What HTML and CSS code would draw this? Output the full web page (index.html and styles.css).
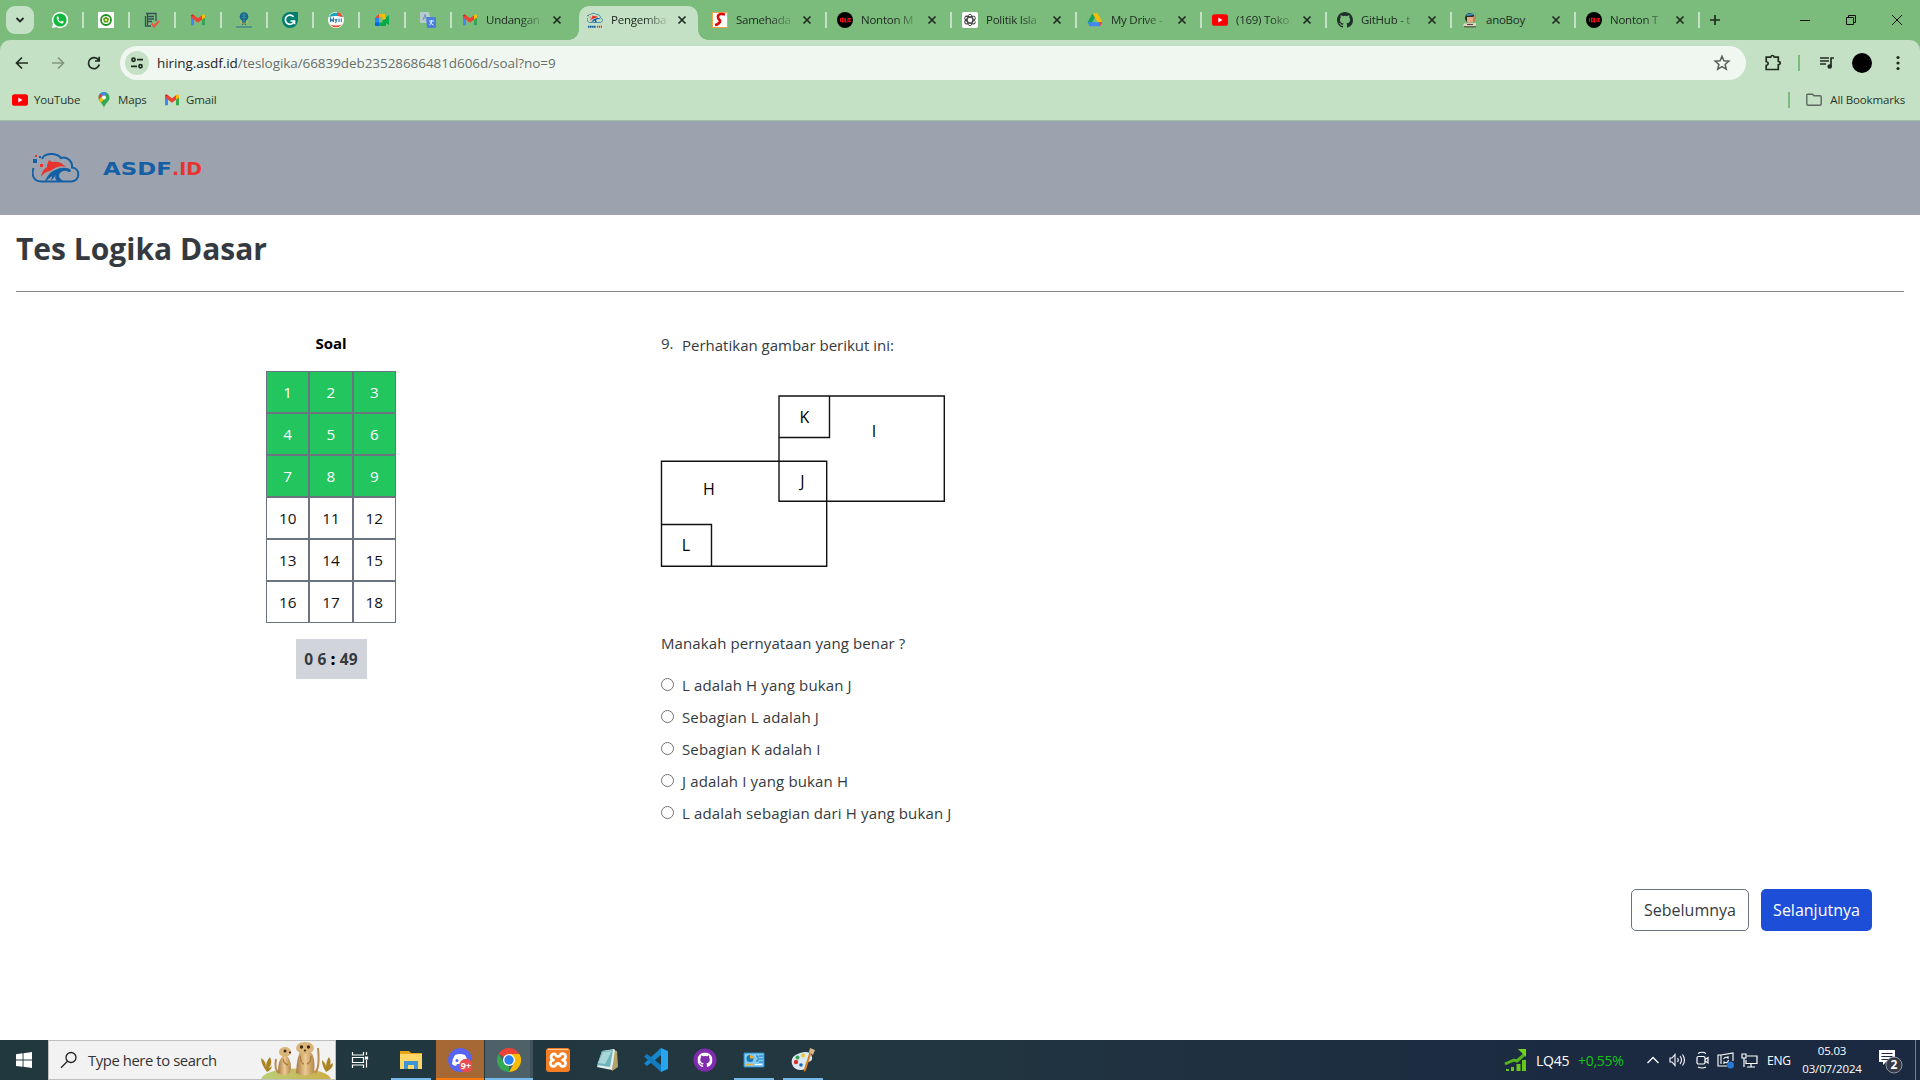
FILE: index.html
```html
<!DOCTYPE html>
<html lang="id">
<head>
<meta charset="utf-8">
<title>Pengembangan ASDF.ID</title>
<link rel="stylesheet" href="styles.css">
</head>
<body>
<svg class="defs" width="0" height="0">
  <symbol id="gmail" viewBox="0 0 16 16">
    <path d="M1 4.5V13.2h3V7.5z" fill="#4285f4"/><path d="M15 4.5v8.7h-3V7.5z" fill="#34a853"/>
    <path d="M1 4.2 4 6.6V3.2L3 2.6C2 2 1 2.800 1 4.200z" fill="#c5221f"/>
    <path d="M1 4.200v1.300l7 5.300 7-5.300-3-2.300-4 3-4-3z" fill="#ea4335"/><path d="M12 3.200v4.400l3-2.200V4.200c0-1.500-1-2.100-2-1.600z" fill="#fbbc04"/>
  </symbol>
  <symbol id="youtube" viewBox="0 0 16 16"><rect y="2.200" width="16" height="11.600" rx="2.600" fill="#f00"/><path d="M6.300 5.500v5L10.500 8z" fill="#fff"/></symbol>
  <symbol id="close" viewBox="0 0 16 16"><path d="m4.500 4.500 7 7m0-7-7 7" stroke="#202b22" stroke-width="1.700" fill="none"/></symbol>
  <symbol id="idlix" viewBox="0 0 16 16"><circle cx="8" cy="8" r="8"/><path d="M3.500 6v4M5.500 6v4h.6q1.200 0 1.200-2t-1.200-2zM8.500 6v4h1.500M11 6v4M12 6l1.500 4m0-4L12 10" stroke="#f00f18" stroke-width="1.100" fill="none"/></symbol>
  <symbol id="octocat" viewBox="0 0 16 16"><path d="M8 0C3.580 0 0 3.580 0 8c0 3.540 2.290 6.530 5.470 7.590.4.070.55-.17.55-.38 0-.19-.01-.82-.01-1.490-2.010.37-2.530-.49-2.690-.94-.09-.23-.48-.94-.82-1.130-.28-.15-.68-.52-.01-.53.63-.01 1.080.58 1.230.82.72 1.210 1.870.87 2.330.66.07-.52.28-.87.51-1.070-1.780-.2-3.640-.89-3.640-3.950 0-.87.31-1.590.82-2.150-.08-.2-.36-1.020.08-2.120 0 0 .67-.21 2.200.82a7.600 7.600 0 0 1 4 0c1.530-1.040 2.200-.82 2.200-.82.44 1.100.16 1.920.08 2.120.51.56.82 1.270.82 2.150 0 3.070-1.870 3.750-3.650 3.950.29.25.54.73.54 1.480 0 1.070-.01 1.930-.01 2.200 0 .21.15.46.55.38A8 8 0 0 0 16 8c0-4.420-3.580-8-8-8z"/></symbol>
  <symbol id="cloud" viewBox="0 0 48 30">
    <path d="M1.500 15C-1 22 2 28.500 9 28.500h30c9 0 10-13 1-14C41 8 34 3 29 5 24-1 12 0 10 6" fill="none" stroke="#1560a5" stroke-width="2"/>
    <path d="M15 12 17 7l3 2q5-1 9 1l5 4q-6-2-11 1l-5 3q-6 1-9 6 1-7 6-10z" fill="#e8332e"/>
    <path d="M13 28q4-9 10-11 8-4 15-1l1 2q-2 2-4 0-4-1-7 2-3 4 3 8h-6q-3-3-1-6l-5 6 1-5-6 5z" fill="#1560a5"/>
    <path d="M1 6h4v4H1zM7 3h2v2H7z" fill="#1560a5"/><path d="M3 2h2v2H3zM8 11h3v3H8z" fill="#e8332e"/>
  </symbol>
</svg>

<header class="browser">
  <div class="tabstrip">
    <button class="tab-search"><svg width="10" height="10" viewBox="0 0 10 10"><path d="m1.500 3 3.500 3.500L8.500 3" fill="none" stroke="#1c2a1f" stroke-width="1.800"/></svg></button>
    <div class="pins">
      <div class="pin"><svg viewBox="0 0 16 16"><path d="M8 0a8 8 0 0 0-7 11.800L0 16l4.300-1.100A8 8 0 1 0 8 0z" fill="#fff"/><circle cx="8" cy="8" r="6.600" fill="#12b83e"/><path d="M5.500 4.200q-1.600 1.300-.4 3.500 1.600 3 4.200 3.800 2 .4 2.500-1.800L9.900 8.800l-.9 1q-1.700-.8-2.600-2.400l.7-.9-.8-2z" fill="#fff"/></svg></div>
      <div class="pin"><svg viewBox="0 0 16 16"><path d="M0 0h16v16H0z" fill="#fff"/><circle cx="8" cy="8" r="5" fill="none" stroke="#1e9322" stroke-width="1.800"/><path d="m8 4.500 3 2.300-1 3.700H6L5 6.800z" fill="#5e9f16"/><path d="M7 7h2v2H7z" fill="#fff176"/></svg></div>
      <div class="pin"><svg viewBox="0 0 16 16"><path d="M2 1.500h10V9M7 14H1.500V4M4 4.500h6M4 7h6M4 9.500h4M3.500 2v11" fill="none" stroke="#32505a" stroke-width="1.300"/><path d="m7.500 11.500 2.500 3 5-5.500" fill="none" stroke="#f15343" stroke-width="2"/></svg></div>
      <div class="pin"><svg><use href="#gmail"/></svg></div>
      <div class="pin"><svg viewBox="0 0 16 16"><circle cx="8" cy="4.500" r="4.300" fill="#176193"/><path d="M6 8h4v5H6zM0 14.500h16v1H0z" fill="#286c91"/><path d="m4 9 4 3.500L12 9" fill="none" stroke="#e0b83b"/><path d="M5.500 3h5M5.500 5.500h5M8 1v10" stroke="#3e9a99" stroke-width=".8"/></svg></div>
      <div class="pin"><svg viewBox="0 0 16 16"><path d="M8 0h8v8a8 8 0 1 1-8-8" fill="#027e6f"/><path d="M11.500 4.800A4.600 4.600 0 1 0 12.300 9H8.500m4 0v3.200" fill="none" stroke="#fff" stroke-width="1.700"/></svg></div>
      <div class="pin"><svg viewBox="0 0 16 16"><circle cx="8" cy="8" r="8" fill="#fff"/><path d="M1 5a8 8 0 0 1 14 0q-7-2-14 0z" fill="#16a0bd"/><path d="M9 .1A8 8 0 0 1 15 5l-5-1zM2 12.500a8 8 0 0 0 12 0q-6 2-12 0z" fill="#ef4b32"/><path d="M2.500 10V6.500L4 9l1.500-2.500V10M7 7l1 2 1-2-1.500 4M11 6.500V10m2.300-3.500V10" fill="none" stroke="#2478ae" stroke-width="1.100"/></svg></div>
      <div class="pin"><svg viewBox="0 0 16 16"><path d="M1 6h4v5H1z" fill="#2684fc"/><path d="M5 2h6v3H5z" fill="#ffba00"/><path d="M5 2v4H1z" fill="#ea4335"/><path d="M1 10.500h4V14H2q-1 0-1-1z" fill="#0066da"/><path d="M5 10.500h3.500V8L15 3v10l-3-2v2q0 1-1 1H5z" fill="#00ac47"/><path d="M8.500 5H11q1 0 1 1v1L8.500 8z" fill="#ffba00"/></svg></div>
      <div class="pin"><svg viewBox="0 0 16 16"><path d="M1 0h8l2.500 11H1q-1 0-1-1V1q0-1 1-1z" fill="#b9cccd"/><path d="M6 5h9q1 0 1 1v9q0 1-1 1H7z" fill="#4a7fdc"/><path d="m3 8 2-5.500L7 8M3.800 6h2.500" fill="none" stroke="#6b93cc"/><path d="M9 9h5m-2.500-1v1q0 3-2 4m.5-3q1 2 3.500 3" fill="none" stroke="#e6efff"/></svg></div>
    </div>
    <div class="tabs">
      <div class="tab bare"><svg><use href="#gmail"/></svg><span>Undangan</span><svg class="x"><use href="#close"/></svg></div>
      <div class="tab active"><svg viewBox="0 0 48 48"><use href="#cloud" width="48" height="36"/><path d="M3 44h24" stroke="#1560a5" stroke-width="6" stroke-dasharray="5 1"/><path d="M30 44h15" stroke="#e8332e" stroke-width="6" stroke-dasharray="4 2"/></svg><span>Pengemba</span><svg class="x"><use href="#close"/></svg></div>
      <div class="tab"><svg viewBox="0 0 16 16"><path d="M.5.500h15v15H.500z" fill="#fff" stroke="#f3a14a"/><path d="M13 2.500Q7 1 6 4q-.4 2 1.500 4T5 12.500L3 13" fill="none" stroke="#d80b0b" stroke-width="2.600"/></svg><span>Samehada</span><svg class="x"><use href="#close"/></svg></div>
      <div class="tab"><svg><use href="#idlix"/></svg><span>Nonton M</span><svg class="x"><use href="#close"/></svg></div>
      <div class="tab"><svg viewBox="0 0 16 16"><rect width="16" height="16" rx="2" fill="#fff"/><g fill="none" stroke="#333" stroke-width=".9"><ellipse cx="8" cy="8" rx="2.700" ry="5.800"/><ellipse cx="8" cy="8" rx="2.700" ry="5.800" transform="rotate(60 8 8)"/><ellipse cx="8" cy="8" rx="2.700" ry="5.800" transform="rotate(120 8 8)"/></g></svg><span>Politik Isla</span><svg class="x"><use href="#close"/></svg></div>
      <div class="tab"><svg viewBox="0 0 16 16"><path d="m5.500 1.200-4.800 9 2.200 4L8 5.300z" fill="#16a05d"/><path d="M5.500 1.200h5L15.300 10h-4.800z" fill="#fbbc04"/><path d="M.7 10.200h9.800l-2.400 4H2.900z" fill="#4285f4"/><path d="M10.500 10.200h4.800l-2.400 4H8z" fill="#4285f4"/><path d="M12 10.200h3.300l-2 3.800z" fill="#ea4335"/></svg><span>My Drive -</span><svg class="x"><use href="#close"/></svg></div>
      <div class="tab"><svg><use href="#youtube"/></svg><span>(169) Toko</span><svg class="x"><use href="#close"/></svg></div>
      <div class="tab"><svg fill="#20302a"><use href="#octocat"/></svg><span>GitHub - t</span><svg class="x"><use href="#close"/></svg></div>
      <div class="tab slim"><svg viewBox="0 0 16 16"><circle cx="8" cy="6" r="5" fill="#302a29"/><path d="M5 5h6v5q-3 2-6 0z" fill="#e3ae85"/><path d="M4 2.500 10 1l2 2-7 1z" fill="#3794c2"/><path d="m11 5 3-4v7l-3 3z" fill="#b78a55"/><path d="M2 11.500 14 11v3H1z" fill="#ddd8c4"/><path d="M2 14.800h12M5 12.500h6" stroke="#55423a"/></svg><span class="whole">anoBoy</span><svg class="x"><use href="#close"/></svg></div>
      <div class="tab slim"><svg><use href="#idlix"/></svg><span>Nonton T</span><svg class="x"><use href="#close"/></svg></div>
    </div>
    <svg class="newtab" width="12" height="12" viewBox="0 0 12 12"><path d="M6 1v10M1 6h10" stroke="#202b22" stroke-width="1.700"/></svg>
    <div class="winctl">
      <svg viewBox="0 0 12 12"><path d="M1 6.500h10" stroke="#111"/></svg>
      <svg viewBox="0 0 12 12"><path d="M1.500 3.500h7v7h-7zM3.500 3.500v-2h7v7h-2" fill="none" stroke="#111"/></svg>
      <svg viewBox="0 0 12 12"><path d="m1 1 10 10M11 1 1 11" stroke="#111"/></svg>
    </div>
  </div>

  <div class="panel">
    <div class="toolbar">
      <div class="nav">
        <svg viewBox="0 0 16 16"><path d="M14 8H3m5-5.500L2.500 8 8 13.500" fill="none" stroke="#202b22" stroke-width="1.700"/></svg>
        <svg viewBox="0 0 16 16"><path d="M2 8h11M8 2.500 13.500 8 8 13.500" fill="none" stroke="#82977f" stroke-width="1.700"/></svg>
        <svg viewBox="0 0 16 16"><path d="M13.300 9.500A5.500 5.500 0 1 1 12.500 5M13.200 1.800V6H9" fill="none" stroke="#202b22" stroke-width="1.700"/></svg>
      </div>
      <div class="omnibox">
        <div class="site"><svg width="14" height="14" viewBox="0 0 14 14" fill="none" stroke="#202b22" stroke-width="1.700"><circle cx="3.500" cy="3.700" r="1.600"/><path d="M7 3.700h6M1 10.300h6"/><circle cx="10.500" cy="10.300" r="1.600"/></svg></div>
        <div class="url"><b>hiring.asdf.id</b>/teslogika/66839deb23528686481d606d/soal?no=9</div>
        <svg class="star" width="18" height="18" viewBox="0 0 18 18"><path d="m9 2.300 1.900 4.500 4.900.4-3.700 3.200 1.200 4.800L9 12.600l-4.300 2.600 1.200-4.800L2.200 7.200l4.900-.4z" fill="none" stroke="#55605a" stroke-width="1.500"/></svg>
      </div>
      <div class="actions">
        <svg width="18" height="18" viewBox="0 0 18 18"><path d="M2.200 3.200h4.500q.5-1.700 1.800-1.700t1.800 1.700h4v4.200q2 .3 2 1.700t-2 1.700v4.700H2.200v-4q2-.4 2-2t-2-2z" fill="none" stroke="#202b22" stroke-width="1.700"/></svg>
        <i class="bar"></i>
        <svg width="16" height="16" viewBox="0 0 16 16"><path d="M1 3h9M1 6h9M1 9h6M12 11V3h3" fill="none" stroke="#202b22" stroke-width="1.700"/><circle cx="10.700" cy="11.500" r="2.300" fill="#202b22"/></svg>
        <i class="avatar"></i>
        <svg width="4" height="16" viewBox="0 0 4 16" fill="#202b22"><circle cx="2" cy="2.500" r="1.600"/><circle cx="2" cy="8" r="1.600"/><circle cx="2" cy="13.500" r="1.600"/></svg>
      </div>
    </div>
    <div class="bookmarks">
      <div class="bm b1"><svg><use href="#youtube"/></svg><span>YouTube</span></div>
      <div class="bm b2"><svg viewBox="0 0 16 16"><path d="M8 0a5.500 5.500 0 0 1 5.500 5.500C13.500 10 9 11 8 16 7 11 2.500 10 2.500 5.500A5.500 5.500 0 0 1 8 0z" fill="#34a853"/><path d="M8 0a5.500 5.500 0 0 0-4.300 2L7 5l4-4Q9.700 0 8 0z" fill="#4285f4"/><path d="M3.700 2Q2 4 2.700 7l4-3.500z" fill="#ea4335"/><path d="m3 7.500 3-3 2 3-3.200 3.300z" fill="#fbbc04"/><circle cx="8" cy="5.500" r="2" fill="#fff"/></svg><span>Maps</span></div>
      <div class="bm b3"><svg><use href="#gmail"/></svg><span>Gmail</span></div>
      <div class="bm all"><i class="bar"></i><svg viewBox="0 0 16 16"><path d="M.8 3v9q0 1.200 1.200 1.200h12q1.200 0 1.200-1.200V5q0-1.200-1.200-1.200H8L6.500 2.300H2Q.8 2.300.8 3z" fill="none" stroke="#5d675f" stroke-width="1.400"/></svg><span>All Bookmarks</span></div>
    </div>
  </div>
</header>

<main>
  <div class="brand">
    <svg width="48" height="30"><use href="#cloud"/></svg>
    <svg class="word" width="100" height="16"><text x="0" y="14.500" textLength="69" lengthAdjust="spacingAndGlyphs" fill="#1560a5">ASDF</text><text x="69" y="14.500" textLength="30" lengthAdjust="spacingAndGlyphs" fill="#e8332e">.ID</text></svg>
  </div>
  <h1>Tes Logika Dasar</h1>
  <div class="quiz">
    <aside>
      <h2>Soal</h2>
      <div class="numbers">
        <a class="done">1</a><a class="done">2</a><a class="done">3</a>
        <a class="done">4</a><a class="done">5</a><a class="done">6</a>
        <a class="done">7</a><a class="done">8</a><a class="done">9</a>
        <a>10</a><a>11</a><a>12</a><a>13</a><a>14</a><a>15</a><a>16</a><a>17</a><a>18</a>
      </div>
      <div class="timer">0 6 <b>:</b> 49</div>
    </aside>
    <section class="question">
      <div class="prompt"><span class="no">9.</span><span class="lead">Perhatikan gambar berikut ini:</span></div>
      <svg class="figure" width="285" height="172" viewBox="0 0 285 172">
        <g fill="none" stroke="#111" stroke-width="1.400"><path d="M118 1h165.300v105.300H118zM118 1H168.500v41.500H118z"/><path d="M.5 66.200h165.200v105H.500zM.5 129.500h50v42"/></g>
        <text x="143.500" y="28">K</text><text x="213" y="41.500">I</text><text x="141.500" y="91.500">J</text><text x="48" y="99.500">H</text><text x="25" y="155.500">L</text>
      </svg>
      <p class="ask">Manakah pernyataan yang benar ?</p>
      <div class="options">
        <label><i></i><span>L adalah H yang bukan J</span></label>
        <label><i></i><span>Sebagian L adalah J</span></label>
        <label><i></i><span>Sebagian K adalah I</span></label>
        <label><i></i><span>J adalah I yang bukan H</span></label>
        <label><i></i><span>L adalah sebagian dari H yang bukan J</span></label>
      </div>
    </section>
  </div>
  <div class="pager"><button class="prev">Sebelumnya</button><button class="next">Selanjutnya</button></div>
</main>

<footer class="taskbar">
  <div class="start"><svg width="16" height="16" viewBox="0 0 16 16" fill="#fff"><path d="M0 2.200 6.600 1.300v6.300H0zM7.500 1.200 16 0v7.600H7.500zM0 8.500h6.600v6.300L0 13.900zM7.500 8.500H16V16l-8.500-1.200z"/></svg></div>
  <div class="search">
    <svg width="18" height="18" viewBox="0 0 18 18"><circle cx="11" cy="6.500" r="5" fill="none" stroke="#222" stroke-width="1.300"/><path d="m7.500 10.200-6.500 6.500" stroke="#222" stroke-width="1.300"/></svg>
    <span>Type here to search</span>
    <svg class="meerkats" width="74" height="38" viewBox="0 0 74 38">
      <defs>
        <linearGradient id="fur"><stop stop-color="#a87a42"/><stop offset=".5" stop-color="#ebcb92"/><stop offset="1" stop-color="#b5854a"/></linearGradient>
        <linearGradient id="hill"><stop stop-color="#b9cf78"/><stop offset="1" stop-color="#cfae48"/></linearGradient>
      </defs>
      <ellipse cx="36" cy="39" rx="35" ry="11.500" fill="url(#hill)"/>
      <path d="M7 31Q1 23 1 17q5 3 5 9 0-6 4-10 3 6-1 11 3-1 3-3 0 5-5 7zM66 31q-4-6-4-12 4 3 4 8 0-7 3-11 3 5 0 10 1-3 4-4 0 6-7 9z" fill="#a98421"/>
      <path d="M19 32q-5-3-3-14" fill="none" stroke="#b98c50" stroke-width="2"/><path d="M55 32q5-5 3-25" fill="none" stroke="#b98c50" stroke-width="2"/>
      <path d="M18 32q0-14 5-17h4q6 6 3 17-6 4-12 0z" fill="url(#fur)"/><ellipse cx="25" cy="11" rx="6" ry="5" fill="#dcb578"/>
      <path d="M36 32q1-18 5-22h9q6 6 4 22-9 5-18 0z" fill="url(#fur)"/><path d="M36 8q0-7 9-7t9 7q-2 5-9 5t-9-5z" fill="#dcb578"/>
      <circle cx="41.500" cy="6" r="1.700" fill="#3e2a18"/><circle cx="48.500" cy="6" r="1.700" fill="#3e2a18"/><circle cx="45" cy="9.500" r="1.100" fill="#3e2a18"/>
      <circle cx="25" cy="10" r="1.500" fill="#3e2a18"/><circle cx="30" cy="11.500" r="1.100" fill="#3e2a18"/>
      <path d="M40 15q1 8 4 8m7-8q0 7-4 8M23 18q1 5 5 6" fill="none" stroke="#ad7d42" stroke-width="1.300"/>
    </svg>
  </div>
  <div class="apps">
    <div class="app"><svg viewBox="0 0 24 24" fill="none" stroke="#fff" stroke-width="1.200"><path d="M4.500 4v3h11V4M4.500 20v-3h11v3M4.500 9.500h11v5h-11zM18.500 4v3M18.500 12v7.500"/><path d="M17.500 9h2v2h-2z" fill="#fff"/></svg></div>
    <div class="app run gap"><svg viewBox="0 0 24 24"><path d="M1 3h9l2 2h11v16H1z" fill="#e8a516"/><path d="M1 6h22v15H1z" fill="#ffd768"/><path d="M5 21v-8h14v8h-4v-4H9v4z" fill="#3e96d7"/></svg></div>
    <div class="app alert"><svg viewBox="0 0 24 24"><circle cx="12" cy="12" r="12" fill="#5865f2"/><path d="M7 7q5-2 10 0 3 4 3 9-2 2-4 2l-1-2H9l-1 2q-2 0-4-2 0-5 3-9z" fill="#fff"/><circle cx="9" cy="12.500" r="1.500" fill="#5865f2"/><circle cx="18" cy="17.500" r="6.800" fill="#e84b50"/><text x="18" y="21" text-anchor="middle" class="badge9">9+</text></svg></div>
    <div class="app run focus"><svg viewBox="0 0 24 24"><path d="M12 12 1.600 6A12 12 0 0 1 22.400 6z" fill="#ea4335"/><path d="M12 12 12 24A12 12 0 0 1 1.600 6L7 15z" fill="#34a853"/><path d="M12 6h10.400A12 12 0 0 1 12 24l5-9z" fill="#fbbc04"/><circle cx="12" cy="12" r="6" fill="#fff"/><circle cx="12" cy="12" r="4.700" fill="#2980ee"/></svg></div>
    <div class="app"><svg viewBox="0 0 24 24"><rect width="24" height="24" rx="3" fill="#f57e24"/><path d="M2 1.500h20" stroke="#ffc99b"/><path d="M8.500 6a3 3 0 0 0-2 5.500l1 .5-1 .5a3 3 0 1 0 3 5q.5-2 2.500-2t2.500 2a3 3 0 1 0 3-5l-1-.5 1-.5a3 3 0 1 0-3-5q-.5 2-2.500 2t-2.500-2z" fill="none" stroke="#fff" stroke-width="2.800" stroke-linejoin="round"/></svg></div>
    <div class="app"><svg viewBox="0 0 24 24"><path d="m18 2 4 1 1 16-6 4z" fill="#b6a368"/><path d="m7 3 12-2 1 1-3 20-15-3z" fill="#e4efed"/><path d="m7 3 11-1-3 17-13-2z" fill="#6eb3b9"/><path d="m8 4 9-1-7 13-7-1z" fill="#a8d5d7"/></svg></div>
    <div class="app"><svg viewBox="0 0 24 24"><path d="m17 0 7 3v18l-7 3z" fill="#28a5ef"/><path d="M17 0v7L3 18l-3-2.500z" fill="#1487cf"/><path d="M17 24v-7L3 6 0 8.500z" fill="#137cc1"/></svg></div>
    <div class="app"><svg viewBox="0 0 24 24"><circle cx="12" cy="12" r="11.500" fill="#822bb0"/><use href="#octocat" x="4.500" y="4.500" width="15" height="15" fill="#fff"/></svg></div>
    <div class="app run"><svg viewBox="0 0 24 24"><path d="M2 5h20v14H2z" fill="#83cdf4" stroke="#2785c2"/><circle cx="8" cy="10.500" r="3.500" fill="#1976b8"/><path d="M8 10.500V7a3.500 3.500 0 0 1 3.500 3.500z" fill="#f5af22"/><path d="M14 8h2v5h-2m3-5h4m-4 3h4m-4 3h4" fill="none" stroke="#1976b8"/><path d="M4 16.500h7" stroke="#f5af22" stroke-width="1.500"/><path d="M13 16.500h7" stroke="#fff"/></svg></div>
    <div class="app run"><svg viewBox="0 0 24 24"><path d="M1 16Q-1 8 9 5q11-3 12 4 1 4-4 5-3 1-2 4 0 4-5 4-7 0-9-6z" fill="#dce8ef"/><circle cx="5" cy="14" r="2.200" fill="#d3342c"/><circle cx="6.500" cy="9.500" r="2" fill="#3ba354"/><circle cx="12" cy="7.500" r="2" fill="#e7ca2f"/><circle cx="10" cy="17" r="1.800" fill="#1b66b0"/><path d="m21 3-6 19-2 2v-3L19 3z" fill="#d68025"/><path d="m18 4 1-4 5 2-2 5z" fill="#d6b68a"/></svg></div>
  </div>
  <div class="tray">
    <svg class="stock" width="24" height="24" viewBox="0 0 24 24"><path d="m1 16 9-4 3 1 8-7" fill="none" stroke="#55b51e" stroke-width="3"/><path d="M14 1h8v8z" fill="#73d51c"/><path d="M2 21h3v2H2zM7 19h3v4H7zM12.500 16h4v7h-4zM18 12h4v11h-4z" fill="#66c71a"/></svg>
    <span class="lq">LQ45</span><span class="pct">+0,55%</span>
    <svg class="chev" width="14" height="14" viewBox="0 0 14 14"><path d="m1.500 10 5.500-5.500L12.500 10" fill="none" stroke="#fff" stroke-width="1.300"/></svg>
    <svg class="t1" width="17" height="16" viewBox="0 0 17 16" fill="none" stroke="#fff" stroke-width="1.100"><path d="M1 6h2l3-3.500v11L3 10H1zM8.500 6q1.500 2 0 4M11 4q3 4 0 8M13.500 2.500q4 5.500 0 11"/></svg>
    <svg class="t2" width="16" height="18" viewBox="0 0 16 18" fill="none" stroke="#fff" stroke-width="1.200"><rect x="2" y="5.500" width="8" height="7.500" rx="1.500"/><path d="m10 8.500 3-2v5.500l-3-2M3 2.500q4-2.500 8 0M3 16q4 2 8 0"/></svg>
    <svg class="t3" width="17" height="17" viewBox="0 0 17 17" fill="none" stroke="#fff" stroke-width="1.100"><path d="M16 9V1L4 3H1v11h9M4 3v9"/><path d="M6.500 7q2-3 4.500-1V4M11.500 8q-1 4-4.500 2v2"/><circle cx="13.500" cy="13" r="3.500" fill="#2779d0" stroke="none"/></svg>
    <svg class="t4" width="17" height="16" viewBox="0 0 17 16" fill="none" stroke="#fff" stroke-width="1.200"><path d="M6 4h10v7.500H5V8M10 11.500V15m-4 0h8M1 2h4v4H1zM3 6v9"/></svg>
    <span class="eng">ENG</span>
    <div class="clock"><span>05.03</span><span>03/07/2024</span></div>
    <div class="notif"><svg width="26" height="26" viewBox="0 0 26 26"><path d="M1 2h16v12h-9l-3 3v-3H1z" fill="#fff"/><path d="M3.500 5.500h11m-11 3h11m-11 3h7" stroke="#1b2a41"/><circle cx="16" cy="17" r="8" fill="#343b45" stroke="#8c939e"/><text x="16" y="21.300" text-anchor="middle" class="badge2">2</text></svg></div>
    <i class="peek"></i>
  </div>
</footer>
</body>
</html>
```
FILE: styles.css
```css
* { box-sizing: border-box; }
body { margin: 0; width: 1920px; height: 1080px; overflow: hidden; display: flex; flex-direction: column; background: #fff; font-family: "Open Sans", "Noto Sans", sans-serif; color: #343a40; }
.defs { position: absolute; }
svg { display: block; flex: none; }
button { font: inherit; border: 0; padding: 0; }

.browser { height: 121px; background: #7bbc7d; border-bottom: 1px solid #a3bfa4; flex: none; }
.tabstrip { height: 40px; display: flex; align-items: center; font-size: 11.5px; color: #202b22; }
.tab-search { width: 28px; height: 28px; margin-left: 6px; border-radius: 9px; background: #c5e1c5; display: grid; place-items: center; }
.pins { display: flex; margin-left: 4px; }
.pin { width: 46px; height: 16px; padding-left: 14px; border-right: 2px solid #c5e1c5; }
.pin svg, .tab svg { width: 16px; height: 16px; }
.tabs { display: flex; align-self: stretch; align-items: center; }
.tab { width: 125px; height: 16px; padding-left: 10px; display: flex; align-items: center; border-right: 2px solid #c5e1c5; }
.tab span { width: 56px; margin-left: 8px; white-space: nowrap; line-height: 18px; letter-spacing: -.25px; mask-image: linear-gradient(90deg, #000 60%, rgba(0, 0, 0, .15) 100%); }
.tab .whole { mask-image: none; }
.tab .x { margin-left: 7px; }
.tab.bare { border-color: transparent; }
.tab.active { position: relative; width: 119px; height: 34px; margin: 6px 4px 0 2px; padding: 0 0 6px 8px; border: 0; border-radius: 10px 10px 0 0; background: #c5e1c5; }
.tab.active::before, .tab.active::after { content: ""; position: absolute; bottom: 0; width: 10px; height: 10px; }
.tab.active::before { left: -10px; background: radial-gradient(circle at 0 0, transparent 9.5px, #c5e1c5 10px); }
.tab.active::after { right: -10px; background: radial-gradient(circle at 100% 0, transparent 9.5px, #c5e1c5 10px); }
.tab.slim { width: 124px; }
.tab.slim .x { margin-left: 6px; }
.newtab { margin-left: 9px; }
.winctl { margin-left: auto; display: flex; gap: 34px; padding-right: 17px; }
.winctl svg { width: 12px; height: 12px; }

.panel { height: 80px; border-radius: 10px 10px 0 0; background: #c5e1c5; }
.toolbar { height: 46px; display: flex; align-items: center; }
.nav { display: flex; gap: 20px; padding-left: 14px; width: 120px; }
.nav svg { width: 16px; height: 16px; }
.omnibox { width: 1626px; height: 34px; border-radius: 17px; background: #f0f7f1; display: flex; align-items: center; padding: 0 15px 0 5px; }
.site { width: 24px; height: 24px; border-radius: 50%; background: #c5e1c5; display: grid; place-items: center; }
.url { margin-left: 8px; font-size: 13.5px; color: #666f69; letter-spacing: -.07px; }
.url b { font-weight: 400; color: #1c241f; }
.star { margin-left: auto; }
.actions { display: flex; align-items: center; padding-left: 18px; }
.bar { width: 2px; height: 16px; background: #7bbc7d; }
.actions .bar { margin: 0 19px 0 16px; }
.avatar { width: 20px; height: 20px; border-radius: 50%; background: #000; margin: 0 24px 0 17px; }
.bookmarks { height: 28px; display: flex; align-items: center; padding: 0 15px 0 12px; font-size: 11.5px; letter-spacing: -.15px; color: #25342a; }
.bm { display: flex; align-items: center; white-space: nowrap; }
.bm span { padding-bottom: 1px; }
.bm svg { width: 16px; height: 16px; margin-right: 6px; }
.b1 { width: 84px; }
.b2 { width: 68px; }
.all { margin-left: auto; }
.all svg { margin: 0 8px 0 16px; }

main { height: 919px; display: flex; flex-direction: column; }
.brand { height: 94px; padding: 0 0 0 32px; background: #9ca3af; display: flex; align-items: center; gap: 23px; }
.word { font: bold 17px "DejaVu Sans", sans-serif; }
h1 { height: 77px; margin: 0 16px; padding-top: 13px; border-bottom: 1px solid #85878a; font-size: 30px; line-height: 42px; font-weight: 700; white-space: nowrap; }
.quiz { display: flex; padding-top: 39px; }
aside { width: 661px; padding-left: 1px; display: flex; flex-direction: column; align-items: center; }
h2 { margin: 0; height: 40px; font-size: 15px; line-height: 24px; color: #000; }
.numbers { width: 130px; display: grid; grid-template-columns: repeat(3, 1fr); }
.numbers a { height: 42px; border: 1px solid #6b7280; display: grid; place-items: center; font-size: 15.3px; color: #111; }
.numbers .done { background: #22c55e; color: #fff; }
.timer { width: 71px; height: 40px; margin-top: 16px; background: #d1d5db; display: grid; place-content: center; grid-auto-flow: column; white-space: pre; font-weight: 700; font-size: 15.5px; letter-spacing: .2px; }
.timer b { color: #000; }
.question { width: 700px; font-size: 15px; white-space: nowrap; letter-spacing: .14px; }
.prompt { display: flex; height: 64px; line-height: 24px; letter-spacing: 0; }
.no { width: 21px; }
.lead { padding-top: 2px; }
.figure { overflow: visible; }
.figure text { font: 16px "Open Sans", sans-serif; letter-spacing: 0; fill: #000; text-anchor: middle; }
.ask { margin: 64px 0 18px; line-height: 24px; letter-spacing: .1px; }
.options { display: grid; row-gap: 8px; }
.options label { height: 24px; line-height: 24px; display: flex; }
.options i { width: 13px; height: 13px; margin: 5px 8px 0 0; border: 1px solid #707070; border-radius: 50%; }
.pager { display: flex; gap: 12px; justify-content: flex-end; padding-right: 48px; margin-top: 64px; }
.pager button { height: 42px; border-radius: 5px; font-size: 16px; }
.prev { width: 118px; border: 1px solid #6b7280; background: #fff; color: #343a40; }
.next { width: 111px; background: #1d4ed8; color: #fff; }

.taskbar { height: 40px; display: flex; background: linear-gradient(90deg, #21383f 0, #223740 45%, #1b2a41 82%); color: #fff; }
.start { width: 48px; display: grid; place-items: center; }
.search { width: 288px; background: #f2f2f2; border: 1px solid #bfbfbf; display: flex; align-items: center; padding-left: 11px; color: #333; font-size: 14.8px; letter-spacing: -.4px; }
.search span { margin-left: 10px; white-space: nowrap; }
.meerkats { margin-left: auto; margin-right: 1px; }
.apps { display: flex; gap: 1px; }
.app { width: 48px; display: grid; place-items: center; border-bottom: 2px solid transparent; }
.app svg { width: 24px; height: 24px; margin-top: 2px; }
.gap { margin-left: 2px; }
.run { background: linear-gradient(#76b9ed, #76b9ed) bottom / 40px 2px no-repeat; background-origin: border-box; background-clip: border-box; }
.alert { background: #a66834; border-color: #f7780c; }
.focus { background: #4e6168; border-color: #76b9ed; box-shadow: inset -3px 0 #40525a; }
.tray { margin-left: auto; display: flex; align-items: center; font-size: 14px; white-space: nowrap; }
.lq { width: 42px; margin-left: 8px; letter-spacing: -.2px; }
.pct { width: 68px; color: #13c413; letter-spacing: -.3px; }
.t1 { margin-left: 9px; }
.t2 { margin-left: 9px; }
.t3 { margin-left: 6px; }
.t4 { margin-left: 7px; }
.eng { width: 36px; margin-left: 9px; font-size: 12px; letter-spacing: -.2px; }
.clock { width: 58px; display: grid; justify-items: center; justify-content: center; font-size: 11.5px; letter-spacing: -.15px; line-height: 18px; }
.notif { margin-left: 17px; width: 26px; padding-top: 2px; }
.peek { width: 1px; height: 40px; margin: 0 4px 0 11px; background: #77808d; }
.badge9 { font: bold 9px "Open Sans", sans-serif; fill: #fff; }
.badge2 { font: bold 12px "Open Sans", sans-serif; fill: #fff; }
```
